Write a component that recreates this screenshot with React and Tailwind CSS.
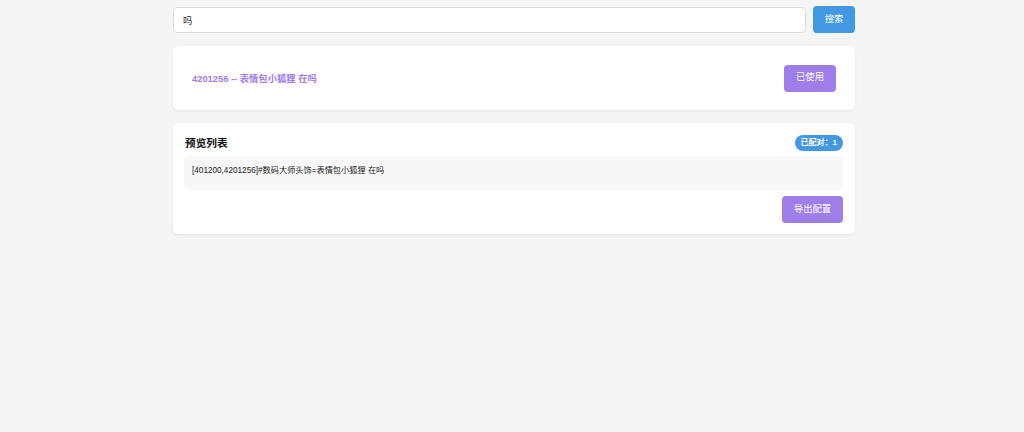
import React, { useState } from 'react';

const font = { fontFamily: '"Liberation Sans", "Noto Sans CJK SC", sans-serif' };

export default function App() {
  const [query, setQuery] = useState('吗');

  return (
    <div className="min-h-[432px] bg-[#f5f5f5] pt-[6px]" style={font}>
      <div className="w-[682px] ml-[173px]">
        {/* search bar */}
        <div className="flex items-center gap-[7px]">
          <input
            value={query}
            onChange={(e) => setQuery(e.target.value)}
            className="flex-1 h-[26px] px-[9px] text-[9.33px] text-[#222] bg-white border border-[#dcdcdc] rounded-[4px] outline-none"
          />
          <button className="h-[27px] w-[42px] rounded-[4px] bg-[#4299e1] text-white text-[9.33px]">
            搜索
          </button>
        </div>

        {/* result */}
        <div className="mt-[13px] bg-white rounded-[5px] shadow-[0_1px_3px_rgba(0,0,0,0.08)] px-[19px] h-[64px] flex items-center justify-between">
          <span className="mt-[3px] text-[9.33px] font-bold text-[#9f7aea]">4201256 -- 表情包小狐狸 在吗</span>
          <button className="h-[27px] w-[52px] rounded-[4px] bg-[#a07eea] text-white text-[9.33px]">
            已使用
          </button>
        </div>

        {/* preview */}
        <div className="mt-[13px] bg-white rounded-[5px] shadow-[0_1px_3px_rgba(0,0,0,0.08)] pt-[12px] pb-[11px] pl-[11px] pr-[12px]">
          <div className="flex items-center justify-between h-[16px] pl-[1px]">
            <h3 className="text-[10.67px] font-bold text-[#111]">预览列表</h3>
            <span className="h-[16px] px-[6px] rounded-full bg-[#4299e1] text-white text-[8px] font-bold flex items-center">
              已配对：1
            </span>
          </div>
          <div className="mt-[5px] h-[34px] bg-[#f7f7f7] rounded-[5px] px-[8px] pt-[9px] text-[8.2px] text-[#222]">
            [401200,4201256]#数码大师头饰=表情包小狐狸 在吗
          </div>
          <div className="mt-[6px] flex justify-end">
            <button className="h-[27px] w-[61px] rounded-[4px] bg-[#a07eea] text-white text-[9.33px]">
              导出配置
            </button>
          </div>
        </div>
      </div>
    </div>
  );
}
